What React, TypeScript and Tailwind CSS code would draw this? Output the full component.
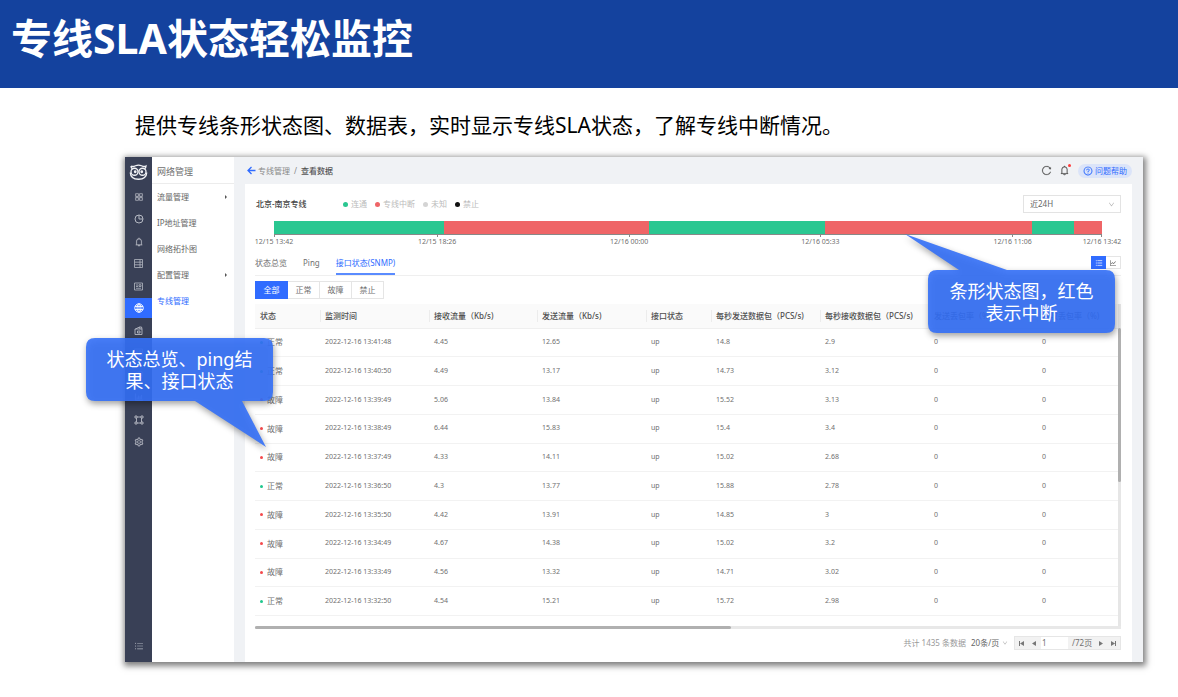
import { Fragment, useState } from "react";
import type { ReactNode } from "react";
import {
  AiOutlineAppstore,
  AiOutlineBarChart,
  AiOutlineBell,
  AiOutlineDown,
  AiOutlineLineChart,
  AiOutlinePieChart,
  AiOutlineQuestionCircle,
  AiOutlineReload,
  AiOutlineSetting,
  AiOutlineUnorderedList,
} from "react-icons/ai";

type Status = "正常" | "故障";

type Row = {
  status: Status;
  time: string;
  rx: string;
  tx: string;
  pktOut: string;
  pktIn: string;
};

const rows: Row[] = [
  { status: "正常", time: "2022-12-16 13:41:48", rx: "4.45", tx: "12.65", pktOut: "14.8", pktIn: "2.9" },
  { status: "正常", time: "2022-12-16 13:40:50", rx: "4.49", tx: "13.17", pktOut: "14.73", pktIn: "3.12" },
  { status: "故障", time: "2022-12-16 13:39:49", rx: "5.06", tx: "13.84", pktOut: "15.52", pktIn: "3.13" },
  { status: "故障", time: "2022-12-16 13:38:49", rx: "6.44", tx: "15.83", pktOut: "15.4", pktIn: "3.4" },
  { status: "故障", time: "2022-12-16 13:37:49", rx: "4.33", tx: "14.11", pktOut: "15.02", pktIn: "2.68" },
  { status: "正常", time: "2022-12-16 13:36:50", rx: "4.3", tx: "13.77", pktOut: "15.88", pktIn: "2.78" },
  { status: "故障", time: "2022-12-16 13:35:50", rx: "4.42", tx: "13.91", pktOut: "14.85", pktIn: "3" },
  { status: "故障", time: "2022-12-16 13:34:49", rx: "4.67", tx: "14.38", pktOut: "15.02", pktIn: "3.2" },
  { status: "故障", time: "2022-12-16 13:33:49", rx: "4.56", tx: "13.32", pktOut: "14.71", pktIn: "3.02" },
  { status: "正常", time: "2022-12-16 13:32:50", rx: "4.54", tx: "15.21", pktOut: "15.72", pktIn: "2.98" },
];

const columns = [
  { label: "状态", width: "w-[65px]" },
  { label: "监测时间", width: "w-[109px]" },
  { label: "接收流量（Kb/s)", width: "w-[108px]" },
  { label: "发送流量（Kb/s)", width: "w-[109px]" },
  { label: "接口状态", width: "w-[65px]" },
  { label: "每秒发送数据包（PCS/s)", width: "w-[109px]" },
  { label: "每秒接收数据包（PCS/s)", width: "w-[109px]" },
  { label: "发送丢包率（%)", width: "w-[108px]" },
  { label: "接收丢包率（%)", width: "w-[81px]" },
];

const legend = [
  { label: "连通", dot: "bg-[#2ac791]" },
  { label: "专线中断", dot: "bg-[#ef6567]" },
  { label: "未知", dot: "bg-[#d4d4d4]" },
  { label: "禁止", dot: "bg-[#111111]" },
];

// share of the 24h window, in per mille
const segments = [
  { up: true, share: 205 },
  { up: false, share: 248 },
  { up: true, share: 213 },
  { up: false, share: 249 },
  { up: true, share: 51 },
  { up: false, share: 34 },
];

const ticks = [
  { label: "12/15 13:42", gap: 0 },
  { label: "12/15 18:26", gap: 197 },
  { label: "12/16 00:00", gap: 232 },
  { label: "12/16 05:33", gap: 231 },
  { label: "12/16 11:06", gap: 232 },
  { label: "12/16 13:42", gap: 108 },
];

const subMenu = [
  { label: "流量管理", children: true },
  { label: "IP地址管理" },
  { label: "网络拓扑图" },
  { label: "配置管理", children: true },
  { label: "专线管理", active: true },
];

export default function App() {
  return (
    <div
      lang="zh-CN"
      className="min-h-screen bg-white font-['Noto_Sans','Noto_Sans_CJK_SC',sans-serif] text-[#707070]"
    >
      <header className="h-[88px] bg-[#14429e] px-[11px] pt-2">
        <h1 className="text-[41px] font-bold leading-[60px] text-white">专线SLA状态轻松监控</h1>
      </header>
      <p className="pl-[135px] pt-[22px] text-[21px] leading-[30px] text-black">
        提供专线条形状态图、数据表，实时显示专线SLA状态，了解专线中断情况。
      </p>
      <div className="relative ml-[125px] mr-[35px] mt-[17px]">
        <div className="flex bg-[#f0f2f5] shadow-[1px_2px_6px_2px_rgba(0,0,0,0.5)]">
          <IconRail />
          <SubMenu />
          <main className="flex min-w-0 flex-1 flex-col px-[11px]">
            <TopBar />
            <section className="flex-1 bg-white pb-3 pl-[10px] pr-[11px] pt-[11px]">
              <StatusPanel />
              <Tabs />
              <Filters />
              <DataTable />
              <Pagination />
            </section>
          </main>
        </div>
        <Callout
          className="-left-[39px] top-[181px]"
          path="M9 0H178Q187 0 187 9V54Q187 63 178 63H156L180 109L109 63H9Q0 63 0 54V9Q0 0 9 0Z"
        >
          状态总览、ping结
          <br />
          果、接口状态
        </Callout>
        <Callout
          className="right-[28px] top-[113px]"
          path="M9 0H31L-23 -36L79 0H178Q187 0 187 9V54Q187 63 178 63H9Q0 63 0 54V9Q0 0 9 0Z"
        >
          条形状态图，红色
          <br />
          表示中断
        </Callout>
      </div>
    </div>
  );
}

function IconRail() {
  const icons: { name: string; icon: ReactNode }[] = [
    { name: "概览", icon: <AiOutlineAppstore size={10} stroke="currentColor" strokeWidth={20} /> },
    { name: "统计", icon: <PieIcon /> },
    { name: "告警", icon: <AiOutlineBell size={10} stroke="currentColor" strokeWidth={20} /> },
    { name: "服务器", icon: <ServerIcon /> },
    { name: "屏幕", icon: <ScreenIcon /> },
    { name: "网络", icon: <GlobeIcon /> },
    { name: "资产", icon: <AssetIcon /> },
    { name: "文档", icon: <ScreenIcon /> },
    { name: "日志", icon: <AiOutlinePieChart size={10} /> },
    { name: "报表", icon: <AiOutlineBarChart size={10} stroke="currentColor" strokeWidth={20} /> },
    { name: "拓扑", icon: <TopologyIcon /> },
    { name: "设置", icon: <AiOutlineSetting size={10} stroke="currentColor" strokeWidth={20} /> },
  ];
  return (
    <aside className="flex w-[27px] shrink-0 flex-col items-stretch bg-[#394056]">
      <div className="flex h-[30px] items-center justify-center">
        <OwlLogo />
      </div>
      <nav className="flex h-[265px] flex-col justify-between">
        {icons.map(({ name, icon }) => (
          <button
            key={name}
            type="button"
            aria-label={name}
            className={`flex h-5 items-center justify-center ${
              name === "网络" ? "bg-[#306cff] text-white" : "text-[#b4b8c2]"
            }`}
          >
            {icon}
          </button>
        ))}
      </nav>
      <button
        type="button"
        aria-label="收起菜单"
        className="mb-[6px] mt-auto flex h-5 items-center justify-center text-[#b4b8c2]"
      >
        <AiOutlineUnorderedList size={10} />
      </button>
    </aside>
  );
}

function SubMenu() {
  return (
    <nav className="w-[82px] shrink-0 bg-white text-[8px]">
      <h2 className="flex h-[27px] items-center border-b border-[#ececec] pl-[5px] pt-1 text-[9px]">网络管理</h2>
      {subMenu.map((item) => (
        <a
          key={item.label}
          href="#"
          className={`flex h-[26px] items-center justify-between pl-[5px] pr-[7px] ${
            item.active ? "text-[#306cff]" : "text-[#666]"
          }`}
        >
          {item.label}
          {item.children && (
            <svg width="2" height="4" viewBox="0 0 2 4" fill="#555">
              <path d="M0 0L2 2L0 4Z" />
            </svg>
          )}
        </a>
      ))}
    </nav>
  );
}

function TopBar() {
  return (
    <div className="flex h-[27px] items-center justify-between">
      <div className="flex items-center pl-[2px] text-[8px]">
        <svg className="mr-[2px]" width="9" height="9" viewBox="0 0 18 18" fill="none" stroke="#306cff" strokeWidth="2.6">
          <path d="M17 9H2M9 2L2 9L9 16" />
        </svg>
        <a href="#" className="text-[#888]">
          专线管理
        </a>
        <span className="mx-1 text-[#888]">/</span>
        <span className="font-medium text-[#555]">查看数据</span>
      </div>
      <div className="flex items-center">
        <button type="button" aria-label="刷新" className="mr-[7px] text-[#555]">
          <AiOutlineReload size={11} stroke="currentColor" strokeWidth={16} />
        </button>
        <button type="button" aria-label="消息" className="relative mr-2 text-[#555]">
          <AiOutlineBell size={11} stroke="currentColor" strokeWidth={16} />
          <span className="absolute -right-[1px] -top-[1px] h-[3px] w-[3px] rounded-full bg-[#ff3b3b]" />
        </button>
        <button
          type="button"
          className="flex h-[14px] items-center gap-[2px] rounded-full bg-[#dbe4f9] px-[5px] text-[8px] text-[#306cff]"
        >
          <AiOutlineQuestionCircle size={10} stroke="currentColor" strokeWidth={16} />
          问题帮助
        </button>
      </div>
    </div>
  );
}

function StatusPanel() {
  return (
    <div>
      <div className="flex h-[18px] items-center">
        <h3 className="w-[88px] pl-px text-[8px] font-medium text-[#444]">北京-南京专线</h3>
        <ul className="flex flex-1 gap-2 text-[8px] text-[#bbb]">
          {legend.map((item) => (
            <li key={item.label} className="flex items-center gap-[3px]">
              <span className={`h-[5px] w-[5px] rounded-full ${item.dot}`} />
              {item.label}
            </li>
          ))}
        </ul>
        <div className="relative flex h-[18px]">
          <select
            aria-label="时间范围"
            className="h-[18px] w-[98px] appearance-none border border-[#e3e3e3] bg-white pl-[6px] text-[8px] text-[#666]"
          >
            <option>近24H</option>
          </select>
          <AiOutlineDown size={7} className="pointer-events-none absolute right-[6px] top-[6px] text-[#aaa]" />
        </div>
      </div>
      <div className="mx-[19px] mt-2">
        <div className="flex h-[14px] border-b border-[#888]">
          {segments.map((s, i) => (
            <div key={i} className={s.up ? "bg-[#2ac791]" : "bg-[#ef6567]"} style={{ flexGrow: s.share }} />
          ))}
        </div>
        <div className="flex h-[17px] text-[7px] leading-[9px]">
          {ticks.map((t) => (
            <Fragment key={t.label}>
              <span style={{ flexGrow: t.gap }} />
              <span className="flex w-0 flex-col items-center whitespace-nowrap">
                <span className="h-[2px] w-px bg-[#888]" />
                {t.label}
              </span>
            </Fragment>
          ))}
        </div>
      </div>
    </div>
  );
}

function Tabs() {
  const [tab, setTab] = useState("接口状态(SNMP)");
  return (
    <div className="flex h-[24px] items-end justify-between border-b border-[#efefef]">
      <div className="flex gap-4 text-[8px]">
        {["状态总览", "Ping", "接口状态(SNMP)"].map((t) => (
          <button
            key={t}
            type="button"
            onClick={() => setTab(t)}
            className={`h-[23px] border-b-2 ${tab === t ? "border-[#5a8bff] text-[#306cff]" : "border-transparent"}`}
          >
            {t}
          </button>
        ))}
      </div>
      <div className="mb-[6px] flex">
        <button
          type="button"
          aria-label="列表"
          className="flex h-[13px] w-[15px] items-center justify-center bg-[#306cff] text-white"
        >
          <AiOutlineUnorderedList size={8} stroke="currentColor" strokeWidth={20} />
        </button>
        <button
          type="button"
          aria-label="图表"
          className="flex h-[13px] w-[15px] items-center justify-center border border-l-0 border-[#e5e5e5] text-[#555]"
        >
          <AiOutlineLineChart size={8} />
        </button>
      </div>
    </div>
  );
}

function Filters() {
  const [active, setActive] = useState("全部");
  return (
    <div className="mb-[5px] mt-[5px] flex text-[8px]">
      {["全部", "正常", "故障", "禁止"].map((f) => (
        <button
          key={f}
          type="button"
          onClick={() => setActive(f)}
          className={`h-[18px] w-8 border first:w-[33px] ${
            active === f ? "border-[#306cff] bg-[#306cff] text-white" : "border-l-0 border-[#e5e5e5] bg-white"
          }`}
        >
          {f}
        </button>
      ))}
    </div>
  );
}

function DataTable() {
  return (
    <div>
      <div className="flex h-[322px]">
        <div className="min-w-0 flex-1 overflow-hidden">
          <table className="h-[312px] w-full table-fixed border-collapse text-left text-[7px]">
            <thead className="bg-[#fafafa] text-[8px] text-[#505050]">
              <tr className="h-6 border-b border-[#efefef]">
                {columns.map((c, i) => (
                  <th key={c.label} className={`${c.width} p-0 font-medium`}>
                    <div
                      className={`h-3 whitespace-nowrap leading-3 ${i > 0 ? "border-l border-[#ececec] pl-1" : "pl-[5px]"}`}
                    >
                      {c.label}
                    </div>
                  </th>
                ))}
              </tr>
            </thead>
            <tbody>
              {rows.map((r) => (
                <tr key={r.time} className="border-b border-[#f2f2f2]">
                  <td className="p-0 pl-[5px] text-[8px]">
                    <span className="flex items-center gap-1">
                      <span
                        className={`h-[3px] w-[3px] rounded-full ${r.status === "正常" ? "bg-[#1fc78d]" : "bg-[#f4494c]"}`}
                      />
                      {r.status}
                    </span>
                  </td>
                  <td className="p-0 pl-[5px]">{r.time}</td>
                  <td className="p-0 pl-[5px]">{r.rx}</td>
                  <td className="p-0 pl-[5px]">{r.tx}</td>
                  <td className="p-0 pl-[5px]">up</td>
                  <td className="p-0 pl-[5px]">{r.pktOut}</td>
                  <td className="p-0 pl-[5px]">{r.pktIn}</td>
                  <td className="p-0 pl-[5px]">0</td>
                  <td className="p-0 pl-[5px]">0</td>
                </tr>
              ))}
            </tbody>
          </table>
        </div>
        <div className="w-[3px] bg-[#e6e6e6] pt-6">
          <div className="h-[154px] rounded-full bg-[#b0b0b0]" />
        </div>
      </div>
      <div className="h-[3px] bg-[#e8e8e8]">
        <div className="h-full w-[55%] rounded-full bg-[#b0b0b0]" />
      </div>
    </div>
  );
}

function Pagination() {
  return (
    <div className="mt-[7px] flex h-[14px] items-center justify-end text-[8px]">
      <span className="mr-[5px] text-[#999]">共计 1435 条数据</span>
      <div className="relative mr-[6px] flex">
        <select aria-label="每页条数" className="w-[37px] appearance-none bg-transparent text-[8px] text-[#666]">
          <option>20条/页</option>
        </select>
        <AiOutlineDown size={6} className="pointer-events-none absolute right-0 top-[3px] text-[#aaa]" />
      </div>
      <div className="flex h-[14px] w-[107px] items-center border border-[#e6e6e6] bg-[#f2f2f2]">
        <PageButton label="首页" d="M0 0H1V5H0ZM5 0V5L1 2.5Z" />
        <PageButton label="上一页" d="M4 0V5L0 2.5Z" />
        <input aria-label="页码" defaultValue="1" className="h-3 w-[27px] bg-white pl-px text-[8px]" />
        <span className="flex-1 pl-1">/72页</span>
        <PageButton label="下一页" d="M1 0V5L5 2.5Z" />
        <PageButton label="末页" d="M4 0H5V5H4ZM0 0V5L4 2.5Z" />
      </div>
    </div>
  );
}

function PageButton({ label, d }: { label: string; d: string }) {
  return (
    <button type="button" aria-label={label} className="flex h-3 w-[13px] items-center justify-center">
      <svg width="5" height="5" viewBox="0 0 5 5" fill="#777">
        <path d={d} />
      </svg>
    </button>
  );
}

function Callout({ className, path, children }: { className: string; path: string; children: ReactNode }) {
  return (
    <div className={`absolute h-[63px] w-[187px] ${className}`}>
      <svg
        className="absolute inset-0 overflow-visible drop-shadow-[1px_3px_3px_rgba(0,0,0,0.4)]"
        width="187"
        height="63"
        viewBox="0 0 187 63"
      >
        <path d={path} fill="#3470f7" fillOpacity="0.9" />
      </svg>
      <p className="relative pt-[10px] text-center text-[18px] leading-[22px] text-white">{children}</p>
    </div>
  );
}

function OwlLogo() {
  return (
    <svg width="19" height="17" viewBox="0 0 38 34" fill="none" stroke="#f2f3f6" strokeWidth="2.6">
      <path d="M4 4C7 6 10 5 13 3.5C17 2 21 2 25 3.5C28 5 31 6 34 4C34 7 33 9 31 10M4 4C4 7 5 9 7 10" />
      <circle cx="11" cy="15.5" r="7" />
      <circle cx="27" cy="15.5" r="7" />
      <circle cx="12.5" cy="15.5" r="1.5" fill="#f2f3f6" />
      <circle cx="25.5" cy="15.5" r="1.5" fill="#f2f3f6" />
      <path d="M2.5 17C3 27 11 30.5 19 30.5C27 30.5 35 27 35.5 17" />
    </svg>
  );
}

function PieIcon() {
  return (
    <svg width="10" height="10" viewBox="0 0 20 20" fill="none" stroke="currentColor" strokeWidth="2">
      <circle cx="10" cy="10" r="8" />
      <path d="M10 2V10H18" />
    </svg>
  );
}

function GlobeIcon() {
  return (
    <svg width="10" height="10" viewBox="0 0 20 20" fill="none" stroke="currentColor" strokeWidth="1.8">
      <circle cx="10" cy="10" r="8.5" />
      <ellipse cx="10" cy="10" rx="4" ry="8.5" />
      <path d="M10 1.5V18.5M2 7H18M2 13H18" />
    </svg>
  );
}

function ServerIcon() {
  return (
    <svg width="9" height="9" viewBox="0 0 18 18" fill="none" stroke="currentColor" strokeWidth="1.6">
      <path d="M1 1H17V17H1ZM1 6.3H17M1 11.6H17M12 1V17" />
    </svg>
  );
}

function ScreenIcon() {
  return (
    <svg width="9" height="9" viewBox="0 0 18 18" fill="none" stroke="currentColor" strokeWidth="1.6">
      <path d="M1 2H17V16H1ZM4 6H8M4 9H8M4 12.5H14M10 5.5H14V9H10Z" />
    </svg>
  );
}

function AssetIcon() {
  return (
    <svg width="9" height="9" viewBox="0 0 18 18" fill="none" stroke="currentColor" strokeWidth="1.8">
      <path d="M3 6L11 2L12 6M11 2H15L16 6M2 6H16V17H2ZM7 10H12V14H7Z" />
    </svg>
  );
}

function TopologyIcon() {
  return (
    <svg width="10" height="10" viewBox="0 0 20 20" fill="none" stroke="currentColor" strokeWidth="1.8">
      <path d="M2 2H6V6H2ZM14 2H18V6H14ZM2 14H6V18H2ZM14 14H18V18H14ZM6 4H14M6 16H14M5 6V14M15 6V14" />
    </svg>
  );
}
